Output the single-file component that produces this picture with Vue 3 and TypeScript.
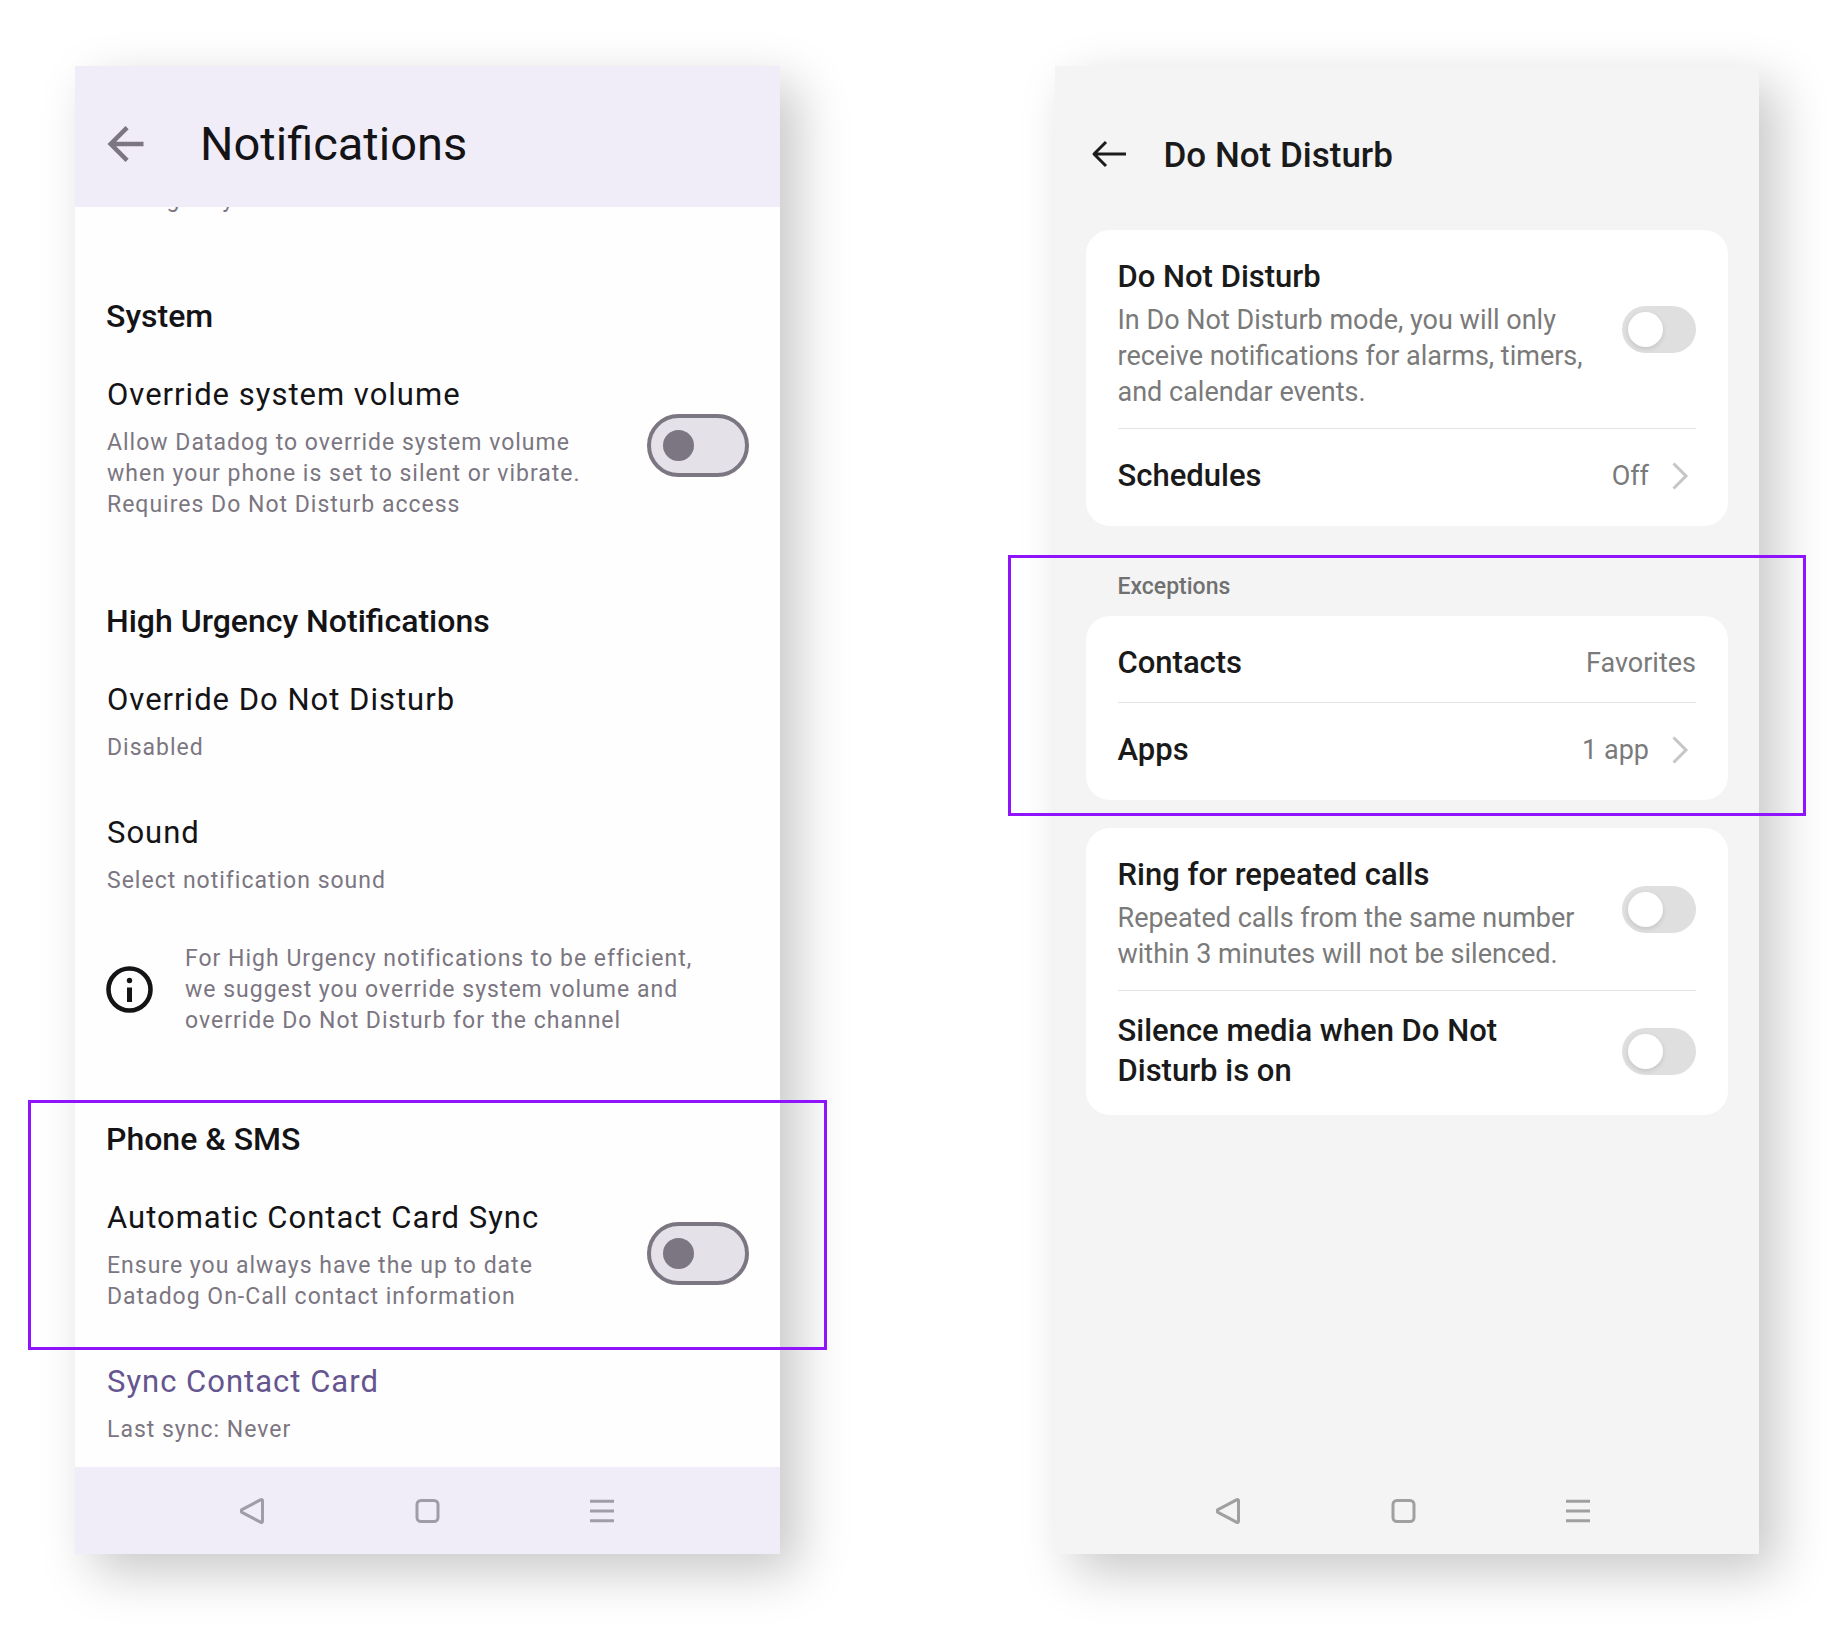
<script setup lang="ts">
import { ref } from 'vue'

const overrideVolume = ref(false)
const contactSync = ref(false)
const doNotDisturb = ref(false)
const repeatedCalls = ref(false)
const silenceMedia = ref(false)
</script>

<template>
  <main class="stage">
    <section class="phone material" aria-label="Notifications settings">
      <header class="app-bar">
        <button class="icon-button" type="button" aria-label="Back">
          <svg width="37" height="36" viewBox="4 4 16 16" fill="#7b7681">
            <path d="M20 11H7.83l5.59-5.59L12 4l-8 8 8 8 1.41-1.41L7.83 13H20z" />
          </svg>
        </button>
        <h1>Notifications</h1>
      </header>

      <div class="list">
        <p class="scrolled note">Configure your notification rules</p>

        <section class="group">
          <h2>System</h2>
          <div class="item">
            <div class="item-text">
              <label class="item-title" for="override-volume">Override system volume</label>
              <p class="note">
                Allow Datadog to override system volume<br />
                when your phone is set to silent or vibrate.<br />
                Requires Do Not Disturb access
              </p>
            </div>
            <input id="override-volume" v-model="overrideVolume" class="m-switch" type="checkbox" role="switch" />
          </div>
        </section>

        <section class="group">
          <h2>High Urgency Notifications</h2>
          <div class="item">
            <div class="item-text">
              <h3 class="item-title">Override Do Not Disturb</h3>
              <p class="note">Disabled</p>
            </div>
          </div>
          <div class="item">
            <div class="item-text">
              <h3 class="item-title">Sound</h3>
              <p class="note">Select notification sound</p>
            </div>
          </div>
          <div class="info">
            <svg width="47" height="47" viewBox="0 0 47 47" fill="none" aria-hidden="true">
              <circle cx="23.5" cy="23.5" r="21" stroke="#141316" stroke-width="4.6" />
              <circle cx="23.5" cy="14.5" r="2.7" fill="#141316" />
              <path d="M21 21.5h5V36h-5z" fill="#141316" />
            </svg>
            <p class="note">
              For High Urgency notifications to be efficient,<br />
              we suggest you override system volume and<br />
              override Do Not Disturb for the channel
            </p>
          </div>
        </section>

        <section class="group framed">
          <h2>Phone &amp; SMS</h2>
          <div class="item">
            <div class="item-text">
              <label class="item-title" for="contact-sync">Automatic Contact Card Sync</label>
              <p class="note">
                Ensure you always have the up to date<br />
                Datadog On-Call contact information
              </p>
            </div>
            <input id="contact-sync" v-model="contactSync" class="m-switch" type="checkbox" role="switch" />
          </div>
        </section>

        <div class="item">
          <div class="item-text">
            <button class="item-title link" type="button">Sync Contact Card</button>
            <p class="note">Last sync: Never</p>
          </div>
        </div>
      </div>

      <nav class="nav-bar" aria-label="System navigation">
        <button type="button" aria-label="Back">
          <svg width="25" height="28" viewBox="0 0 25 28"><path d="M22.5 3.5v21a1 1 0 0 1-1.6.8L2 15.4a1.6 1.6 0 0 1 0-2.8L20.9 2.7a1 1 0 0 1 1.6.8z" /></svg>
        </button>
        <button type="button" aria-label="Home">
          <svg width="25" height="28" viewBox="0 0 25 28"><rect x="2" y="3.5" width="21" height="21" rx="4" /></svg>
        </button>
        <button type="button" aria-label="Recent apps">
          <svg width="25" height="28" viewBox="0 0 25 28"><path d="M0 4.2h24M0 14h24M0 23.8h24" /></svg>
        </button>
      </nav>
    </section>

    <section class="phone oxygen" aria-label="Do Not Disturb settings">
      <header class="app-bar">
        <button class="icon-button" type="button" aria-label="Back">
          <svg width="36" height="28" viewBox="0 0 36 28" fill="none" stroke="#1c1c1c" stroke-width="3" stroke-linejoin="round">
            <path d="M15 2L3 14l12 12M3 14h32" />
          </svg>
        </button>
        <h1>Do Not Disturb</h1>
      </header>

      <div class="cards">
        <div class="card">
          <div class="row">
            <div class="row-text">
              <label class="row-title" for="dnd">Do Not Disturb</label>
              <p class="row-note">
                In Do Not Disturb mode, you will only<br />
                receive notifications for alarms, timers,<br />
                and calendar events.
              </p>
            </div>
            <input id="dnd" v-model="doNotDisturb" class="o-switch" type="checkbox" role="switch" />
          </div>
          <div class="row single">
            <h2 class="row-title">Schedules</h2>
            <span class="value">Off</span>
            <svg class="chevron" width="24" height="28" viewBox="0 0 24 28"><path d="M1.5 1.5L14 14 1.5 26.5" /></svg>
          </div>
        </div>

        <section class="exceptions framed">
          <h2 class="label">Exceptions</h2>
          <div class="card">
            <div class="row compact">
              <h3 class="row-title">Contacts</h3>
              <span class="value">Favorites</span>
            </div>
            <div class="row single">
              <h3 class="row-title">Apps</h3>
              <span class="value">1 app</span>
              <svg class="chevron" width="24" height="28" viewBox="0 0 24 28"><path d="M1.5 1.5L14 14 1.5 26.5" /></svg>
            </div>
          </div>
        </section>

        <div class="card">
          <div class="row">
            <div class="row-text">
              <label class="row-title" for="repeated-calls">Ring for repeated calls</label>
              <p class="row-note">
                Repeated calls from the same number<br />
                within 3 minutes will not be silenced.
              </p>
            </div>
            <input id="repeated-calls" v-model="repeatedCalls" class="o-switch" type="checkbox" role="switch" />
          </div>
          <div class="row double">
            <label class="row-title" for="silence-media">Silence media when Do Not<br />Disturb is on</label>
            <input id="silence-media" v-model="silenceMedia" class="o-switch" type="checkbox" role="switch" />
          </div>
        </div>
      </div>

      <nav class="nav-bar" aria-label="System navigation">
        <button type="button" aria-label="Back">
          <svg width="25" height="28" viewBox="0 0 25 28"><path d="M22.5 3.5v21a1 1 0 0 1-1.6.8L2 15.4a1.6 1.6 0 0 1 0-2.8L20.9 2.7a1 1 0 0 1 1.6.8z" /></svg>
        </button>
        <button type="button" aria-label="Home">
          <svg width="25" height="28" viewBox="0 0 25 28"><rect x="2" y="3.5" width="21" height="21" rx="4" /></svg>
        </button>
        <button type="button" aria-label="Recent apps">
          <svg width="25" height="28" viewBox="0 0 25 28"><path d="M0 4.2h24M0 14h24M0 23.8h24" /></svg>
        </button>
      </nav>
    </section>
  </main>
</template>

<style>
body {
  margin: 0;
  background: #fff;
}
</style>

<style scoped>
.stage {
  display: grid;
  grid-template-columns: 1fr 1fr;
  column-gap: 275px;
  padding: 66px 87px 76px 75px;
  font-family: Roboto, 'Liberation Sans', sans-serif;
  color: #141316;
}

h1,
h2,
h3,
p {
  margin: 0;
}

button {
  padding: 0;
  border: 0;
  background: none;
  font: inherit;
  cursor: pointer;
}

svg {
  display: block;
  flex: none;
}

.phone {
  display: flex;
  flex-direction: column;
  box-shadow: 18px 18px 48px rgba(0, 0, 0, 0.22);
}

.app-bar {
  display: flex;
  align-items: center;
}

.framed {
  position: relative;
}

.framed::after {
  content: '';
  position: absolute;
  inset: -16px -47px;
  border: 3px solid #9013fe;
  pointer-events: none;
}

.nav-bar {
  display: flex;
  align-items: center;
  justify-content: center;
  gap: 150px;
  height: 87px;
  margin-top: auto;
}

.nav-bar svg {
  fill: none;
  stroke: #a19da8;
  stroke-width: 3;
}

/* Material screen */

.material {
  background: #fefefe;
}

.material .app-bar {
  position: relative;
  z-index: 1;
  gap: 56px;
  height: 127px;
  padding: 14px 32px 0;
  background: #f1edf8;
}

.material h1 {
  font-size: 47px;
  line-height: 56px;
  font-weight: 400;
}

.material .nav-bar {
  background: #f1edf8;
}

.scrolled {
  margin-top: -23px;
  padding: 0 32px 22px;
}

.group {
  padding-top: 56px;
}

.group.framed {
  margin-top: 56px;
  padding-top: 0;
}

.material h2 {
  padding: 0 31px 7px;
  font-size: 32px;
  line-height: 47px;
  font-weight: 500;
}

.item {
  display: flex;
  align-items: center;
  padding: 24px 31px 22px 32px;
}

.item-text {
  flex: 1;
}

.item-title {
  display: block;
  margin-bottom: 9px;
  font-size: 31px;
  line-height: 47px;
  font-weight: 400;
  letter-spacing: 1px;
}

.link {
  color: #65558f;
}

.note {
  font-size: 23px;
  line-height: 31px;
  letter-spacing: 1px;
  color: #7b7681;
}

.info {
  display: flex;
  align-items: center;
  gap: 32px;
  padding: 25px 31px 24px;
}

.m-switch {
  appearance: none;
  display: flex;
  align-items: center;
  box-sizing: border-box;
  width: 102px;
  height: 63px;
  margin: 0;
  padding: 0 12px;
  border: 4px solid #7b7681;
  border-radius: 32px;
  background: #e5e1e8;
}

.m-switch::before {
  content: '';
  width: 31px;
  height: 31px;
  border-radius: 50%;
  background: #7b7681;
}

.m-switch:checked {
  justify-content: flex-end;
}

/* Do Not Disturb screen */

.oxygen {
  background: #f4f4f4;
  color: #1a1a1a;
}

.oxygen .app-bar {
  gap: 37px;
  height: 152px;
  padding: 12px 36px 0;
}

.oxygen h1 {
  padding-top: 3px;
  font-size: 35px;
  line-height: 48px;
  font-weight: 500;
}

.oxygen .nav-bar {
  padding-right: 6px;
}

.oxygen .nav-bar svg {
  stroke: #a0a0a0;
}

.cards > .card {
  margin: 0 31px;
}

.card {
  padding: 0 32px 4px;
  border-radius: 24px;
  background: #fff;
}

.row {
  display: flex;
  align-items: center;
  justify-content: space-between;
}

.row + .row {
  border-top: 1px solid #e4e4e4;
}

.row-text {
  padding: 27px 0 18px;
}

.row-title {
  display: block;
  font-size: 31px;
  line-height: 40px;
  font-weight: 500;
}

.row-note {
  padding-top: 5px;
  font-size: 27px;
  line-height: 36px;
  color: #7a7a7a;
}

.single {
  height: 93px;
}

.compact {
  height: 78px;
  padding-top: 8px;
}

.double {
  height: 120px;
}

.value {
  margin-left: auto;
  font-size: 27px;
  line-height: 36px;
  color: #7a7a7a;
}

.chevron {
  margin-left: 23px;
  fill: none;
  stroke: #c6c6c6;
  stroke-width: 3;
}

.label {
  padding: 0 32px 13px;
  font-size: 23px;
  line-height: 32px;
  font-weight: 500;
  color: #707070;
}

.exceptions {
  margin: 45px 0 28px;
  padding: 0 31px;
}

.o-switch {
  appearance: none;
  display: flex;
  box-sizing: border-box;
  width: 74px;
  height: 47px;
  margin: 0;
  padding: 6px;
  border-radius: 24px;
  background: #dfdfdf;
}

.o-switch::before {
  content: '';
  width: 35px;
  height: 35px;
  border-radius: 50%;
  background: #fff;
  box-shadow: 0 2px 5px rgba(0, 0, 0, 0.12);
}

.o-switch:checked {
  justify-content: flex-end;
}
</style>
